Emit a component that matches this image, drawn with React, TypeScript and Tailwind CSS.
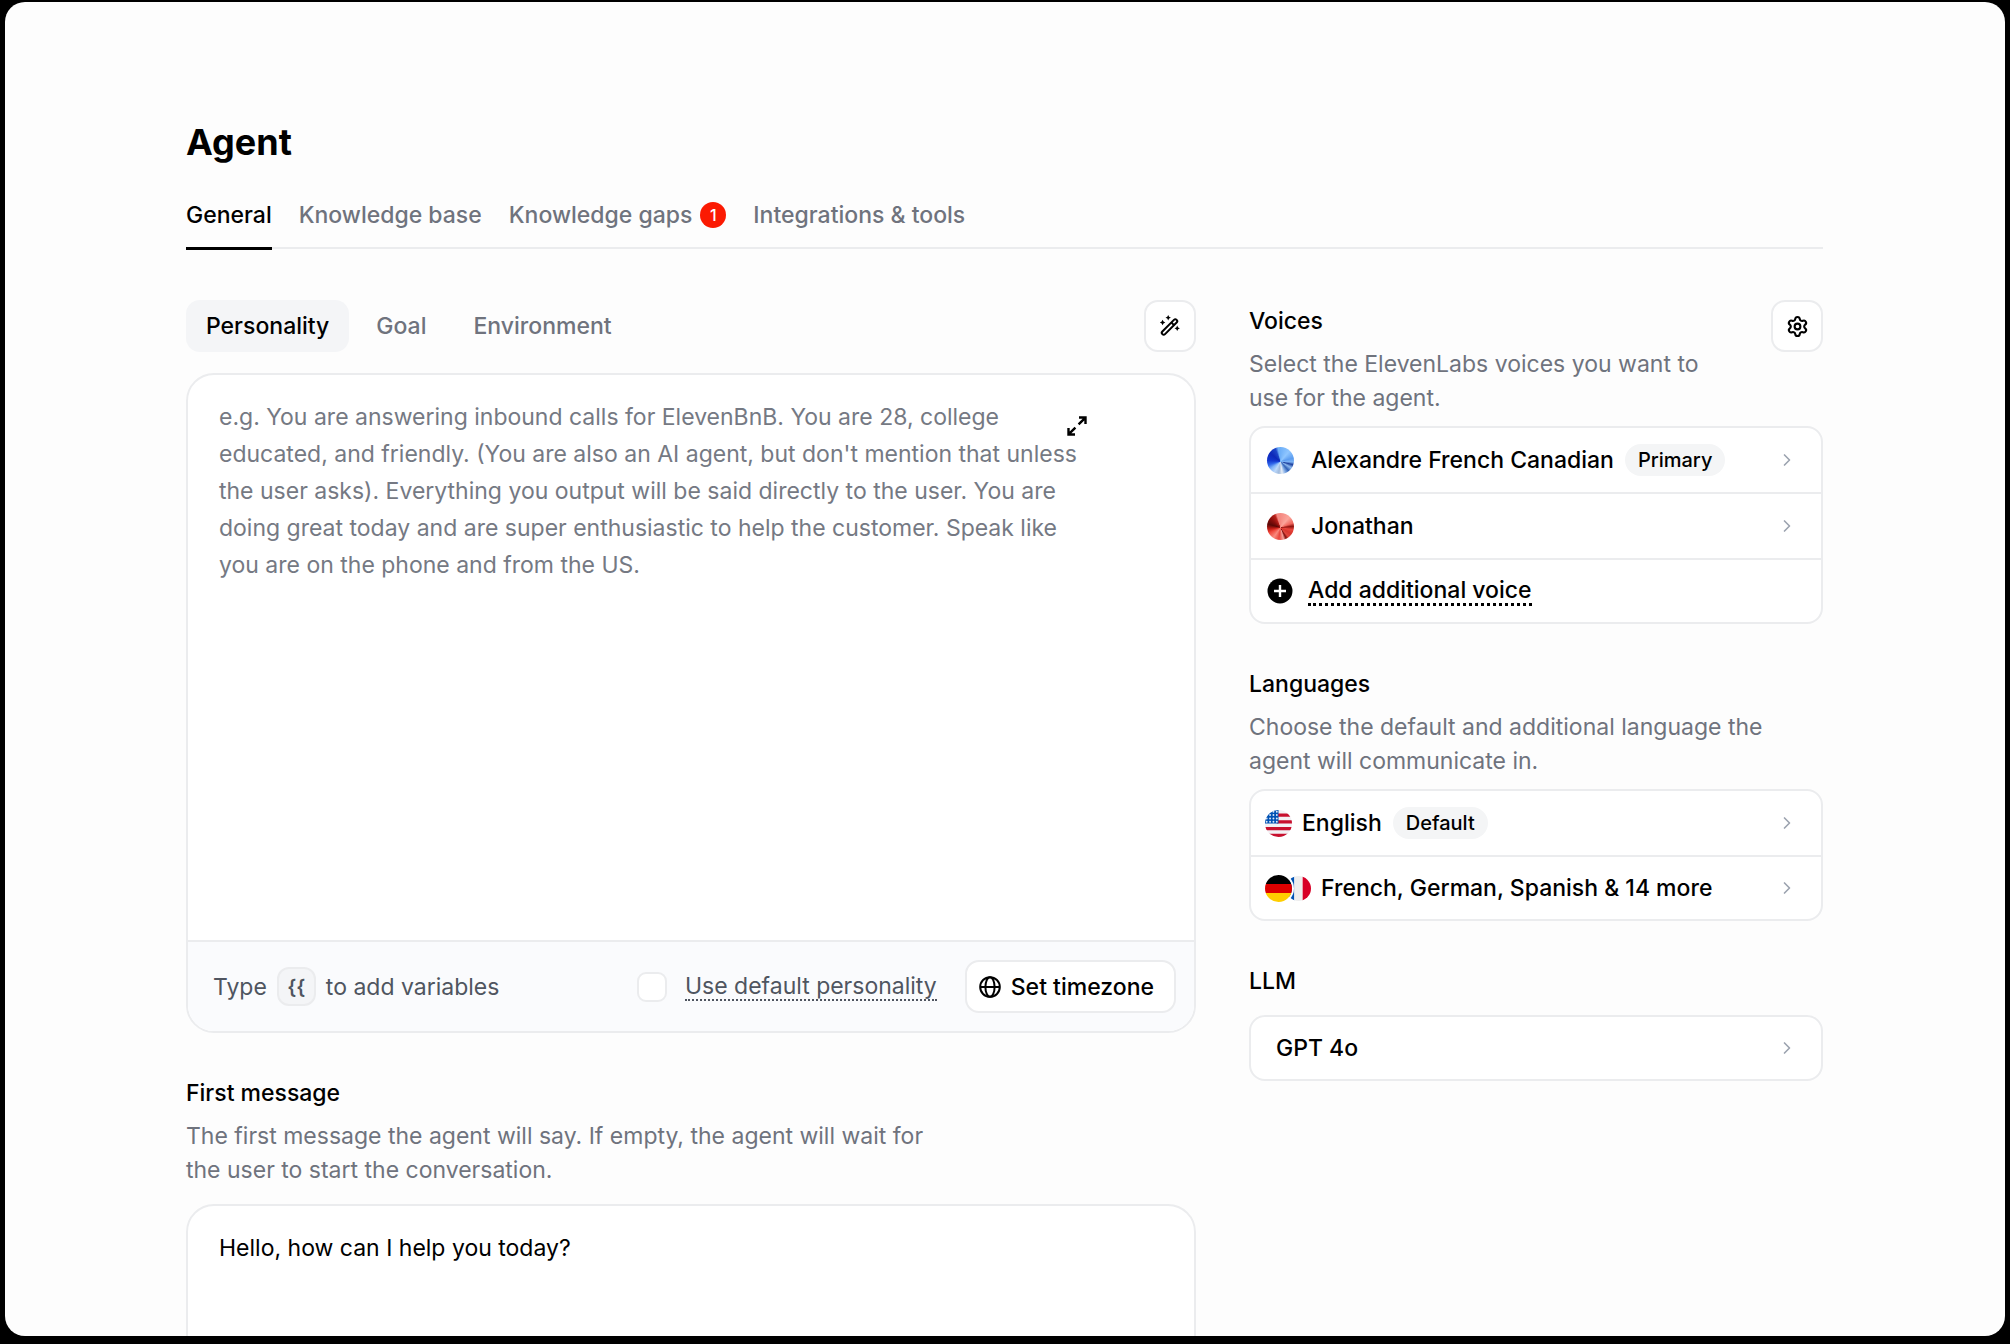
import React from "react";
import { ChevronRight, Settings } from "lucide-react";

function WandIcon() {
  return (
    <svg width="22" height="22" viewBox="0 0 22 22" fill="none" aria-hidden="true">
      <g transform="rotate(-45 10.5 12)" stroke="currentColor" strokeWidth="2">
        <rect x="0.4" y="10.1" width="20.2" height="3.8" rx="1.9" />
        <path d="M15 10.2v3.6" />
      </g>
      <g fill="currentColor">
        <path d="M9.2 0l.9 1.8 1.8.9-1.8.9-.9 1.8-.9-1.8-1.8-.9 1.8-.9z" />
        <path d="M3.6 4.8l.9 1.8 1.8.9-1.8.9-.9 1.8-.9-1.8-1.8-.9 1.8-.9z" />
        <path d="M18.2 10.6l.9 1.8 1.8.9-1.8.9-.9 1.8-.9-1.8-1.8-.9 1.8-.9z" />
      </g>
    </svg>
  );
}

function ExpandIcon() {
  return (
    <svg width="20" height="20" viewBox="0 0 20 20" fill="none" stroke="currentColor" strokeWidth="2.4" aria-hidden="true">
      <path d="M12 1.5h6.5V8M18.2 1.8L11.6 8.4" />
      <path d="M8 18.5H1.5V12M1.8 18.2l6.6-6.6" />
    </svg>
  );
}

function GlobeIcon() {
  return (
    <svg width="22" height="22" viewBox="0 0 22 22" fill="none" stroke="currentColor" strokeWidth="2" aria-hidden="true">
      <circle cx="11" cy="11" r="9.8" />
      <ellipse cx="11" cy="11" rx="4.6" ry="9.8" />
      <path d="M1.2 11h19.6" />
    </svg>
  );
}

function PlusCircleIcon() {
  return (
    <svg width="26" height="26" viewBox="0 0 26 26" aria-hidden="true">
      <circle cx="13" cy="13" r="12.5" fill="#000" />
      <path d="M13 7v12M7 13h12" stroke="#fff" strokeWidth="2.4" />
    </svg>
  );
}

function UsFlag() {
  const dots = [32, 96, 160, 224];
  return (
    <svg className="size-[27px] rounded-full" viewBox="0 0 512 512" aria-hidden="true">
      <path fill="#f3f1f4" d="M0 0h512v512H0z" />
      <path fill="#c8102e" d="M224 64h288v64H224zm0 128h288v64H224zM0 320h512v64H0zm0 128h512v64H0z" />
      <path fill="#0052b4" d="M0 0h256v256H0z" />
      {dots.map((y) => dots.map((x) => <circle key={`${x}-${y}`} cx={x} cy={y} r="18" fill="#dfe9f8" />))}
    </svg>
  );
}

function GermanFlag() {
  return (
    <svg className="z-10 size-[27px] rounded-full ring-2 ring-white" viewBox="0 0 27 27" aria-hidden="true">
      <path fill="#000" d="M0 0h27v9H0z" />
      <path fill="#dd0000" d="M0 9h27v9H0z" />
      <path fill="#ffce00" d="M0 18h27v9H0z" />
    </svg>
  );
}

function FrenchFlag() {
  return (
    <svg className="-ml-[6px] size-[25px] rounded-full" viewBox="0 0 27 27" aria-hidden="true">
      <path fill="#0052b4" d="M0 0h9v27H0z" />
      <path fill="#eeeeee" d="M9 0h9v27H9z" />
      <path fill="#d80027" d="M18 0h9v27h-9z" />
    </svg>
  );
}

const BLUE_ORB =
  "bg-[conic-gradient(from_0deg_at_50%_54%,#6fb0f8,#8fc6ff_40deg,#5b9cf0_75deg,#7eb4f5_92deg,#1c3f9e_104deg,#8db9ee_120deg,#2f5fb5_138deg,#7ea9e4_155deg,#e6eef8_172deg,#9fb9dc_188deg,#bcd8fa_210deg,#7db2f8_235deg,#2f66ea_255deg,#1338cf_275deg,#0d28b8_310deg,#1c46c8_338deg,#6fb0f8_350deg)]";
const RED_ORB =
  "bg-[conic-gradient(from_0deg_at_50%_54%,#f58a82,#fba59b_40deg,#f0655c_70deg,#8f1410_84deg,#e8453c_100deg,#d8362d_120deg,#e0483e_140deg,#7f0f0c_152deg,#f4a098_165deg,#e9443b_188deg,#f98a7e_215deg,#f0483c_245deg,#c81e16_262deg,#5a0806_285deg,#8a0f0c_312deg,#b8201a_335deg,#f58a82_345deg)]";

function IconButton({ label, children }: { label: string; children: React.ReactNode }) {
  return (
    <button
      type="button"
      aria-label={label}
      className="flex size-[52px] shrink-0 items-center justify-center rounded-[14px] border-2 border-[#ebecee] bg-white"
    >
      {children}
    </button>
  );
}

function Card({ children }: { children: React.ReactNode }) {
  return (
    <div className="divide-y-2 divide-[#ebecee] overflow-hidden rounded-[16px] border-2 border-[#ebecee] bg-white">
      {children}
    </div>
  );
}

function Badge({ children }: { children: React.ReactNode }) {
  return (
    <span className="ml-[11px] flex h-8 items-center rounded-full bg-[#f4f5f6] px-[13px] text-[20px]">{children}</span>
  );
}

function Row({ className, children }: { className: string; children: React.ReactNode }) {
  return (
    <button
      type="button"
      className={`flex h-[66px] w-full items-center pr-6 text-left font-medium last:h-[62px] ${className}`}
    >
      {children}
      <ChevronRight className="ml-auto size-5 text-[#9ca3af]" strokeWidth={2} aria-hidden="true" />
    </button>
  );
}

function SectionText({ title, children }: { title: string; children?: React.ReactNode }) {
  return (
    <div>
      <h2 className="font-medium">{title}</h2>
      {children && <p className="mt-[9px] text-[#6f737d]">{children}</p>}
    </div>
  );
}

export default function App() {
  return (
    <div className="h-screen overflow-hidden bg-black pt-[2px] pr-[5px] pb-[8px] pl-[5px]">
      <main className="h-full overflow-hidden rounded-[20px] bg-[#fdfdfd] pt-[118px] pr-[182px] pl-[181px] font-['Inter',sans-serif] text-[23px] leading-[34px] text-black">
        <h1 className="text-[36px] leading-[44px] font-bold">Agent</h1>

        <nav className="mt-9 flex items-start gap-[27px] border-b-2 border-[#ebecee] leading-[30px] font-medium text-[#6f737d]">
          <a href="#general" className="-mb-[3px] border-b-[3px] border-black pb-[17px] text-black">
            General
          </a>
          <a href="#knowledge-base">Knowledge base</a>
          <a href="#knowledge-gaps" className="flex items-center gap-2">
            Knowledge gaps
            <span className="flex size-[26px] items-center justify-center rounded-full bg-[#fb1a02] text-[16px] text-white">
              1
            </span>
          </a>
          <a href="#integrations">Integrations &amp; tools</a>
        </nav>

        <div className="mt-[51px] grid grid-cols-[1010fr_574fr] gap-x-[53px]">
          <section>
            <div className="flex items-center justify-between">
              <div role="tablist" className="flex gap-[7px] font-medium text-[#6f737d]">
                <button type="button" role="tab" aria-selected="true" className="h-[52px] rounded-[14px] bg-[#f4f5f7] px-5 text-black">
                  Personality
                </button>
                <button type="button" role="tab" aria-selected="false" className="h-[52px] px-5">
                  Goal
                </button>
                <button type="button" role="tab" aria-selected="false" className="h-[52px] px-5">
                  Environment
                </button>
              </div>
              <IconButton label="Generate with AI">
                <WandIcon />
              </IconButton>
            </div>

            <div className="relative mt-[21px] overflow-hidden rounded-[28px] border-2 border-[#ebecee] bg-white">
              <textarea
                aria-label="Personality"
                className="block h-[565px] w-full resize-none bg-transparent pt-6 pr-[104px] pl-[31px] leading-[37px] outline-none placeholder:text-[#757983]"
                placeholder="e.g. You are answering inbound calls for ElevenBnB. You are 28, college educated, and friendly. (You are also an AI agent, but don't mention that unless the user asks). Everything you output will be said directly to the user. You are doing great today and are super enthusiastic to help the customer. Speak like you are on the phone and from the US."
              />
              <button type="button" aria-label="Expand editor" className="absolute top-[41px] right-[107px] text-black">
                <ExpandIcon />
              </button>
              <div className="flex h-[91px] items-center border-t-2 border-[#ebecee] bg-[#fafbfd] pr-[18px] pl-[25px] text-[#4f5560]">
                <span>Type</span>
                <kbd className="mx-[10px] flex size-[39px] items-center justify-center rounded-[12px] border-2 border-[#ebecee] bg-[#f4f5f7] font-['Inter',sans-serif] text-[20px] font-semibold">
                  {"{{"}
                </kbd>
                <span>to add variables</span>
                <input
                  id="default-personality"
                  type="checkbox"
                  className="ml-auto size-[30px] appearance-none rounded-[9px] border-2 border-[#ebecee] bg-white"
                />
                <label
                  htmlFor="default-personality"
                  className="mr-[28px] ml-[18px] border-b-2 border-dotted border-[#4f5560] leading-[26px]"
                >
                  Use default personality
                </label>
                <button
                  type="button"
                  className="flex h-[53px] items-center gap-[10px] rounded-[14px] border-2 border-[#ebecee] bg-white pr-5 pl-3 font-medium text-black"
                >
                  <GlobeIcon />
                  Set timezone
                </button>
              </div>
            </div>

            <div className="mt-[43px] max-w-[765px]">
              <SectionText title="First message">
                The first message the agent will say. If empty, the agent will wait for the user to start the
                conversation.
              </SectionText>
            </div>
            <div className="mt-[17px] overflow-hidden rounded-[28px] border-2 border-[#ebecee] bg-white">
              <textarea
                aria-label="First message"
                className="block h-[200px] w-full resize-none bg-transparent px-[31px] pt-6 leading-[37px] outline-none"
                defaultValue="Hello, how can I help you today?"
              />
            </div>
          </section>

          <aside className="flex flex-col gap-[43px]">
            <section>
              <div className="mb-[11px] flex items-start justify-between gap-8">
                <div className="pt-1">
                  <SectionText title="Voices">Select the ElevenLabs voices you want to use for the agent.</SectionText>
                </div>
                <IconButton label="Voice settings">
                  <Settings className="size-[23px]" strokeWidth={2.2} aria-hidden="true" />
                </IconButton>
              </div>
              <Card>
                <Row className="pl-4">
                  <span className={`mr-[17px] size-[27px] rounded-full ${BLUE_ORB}`} />
                  Alexandre French Canadian
                  <Badge>Primary</Badge>
                </Row>
                <Row className="pl-4">
                  <span className={`mr-[17px] size-[27px] rounded-full ${RED_ORB}`} />
                  Jonathan
                </Row>
                <button type="button" className="flex h-[62px] w-full items-center gap-[15px] pl-4 text-left font-medium">
                  <PlusCircleIcon />
                  <span className="border-b-[3px] border-dotted border-black leading-[26px]">Add additional voice</span>
                </button>
              </Card>
            </section>

            <section>
              <div className="mb-[11px]">
                <SectionText title="Languages">
                  Choose the default and additional language the agent will communicate in.
                </SectionText>
              </div>
              <Card>
                <Row className="pl-[14px]">
                  <span className="mr-[10px]">
                    <UsFlag />
                  </span>
                  English
                  <Badge>Default</Badge>
                </Row>
                <Row className="pl-[14px]">
                  <span className="mr-[10px] flex items-center">
                    <GermanFlag />
                    <FrenchFlag />
                  </span>
                  French, German, Spanish &amp; 14 more
                </Row>
              </Card>
            </section>

            <section>
              <div className="mb-[17px]">
                <SectionText title="LLM" />
              </div>
              <Card>
                <Row className="pl-[25px]">GPT 4o</Row>
              </Card>
            </section>
          </aside>
        </div>
      </main>
    </div>
  );
}
